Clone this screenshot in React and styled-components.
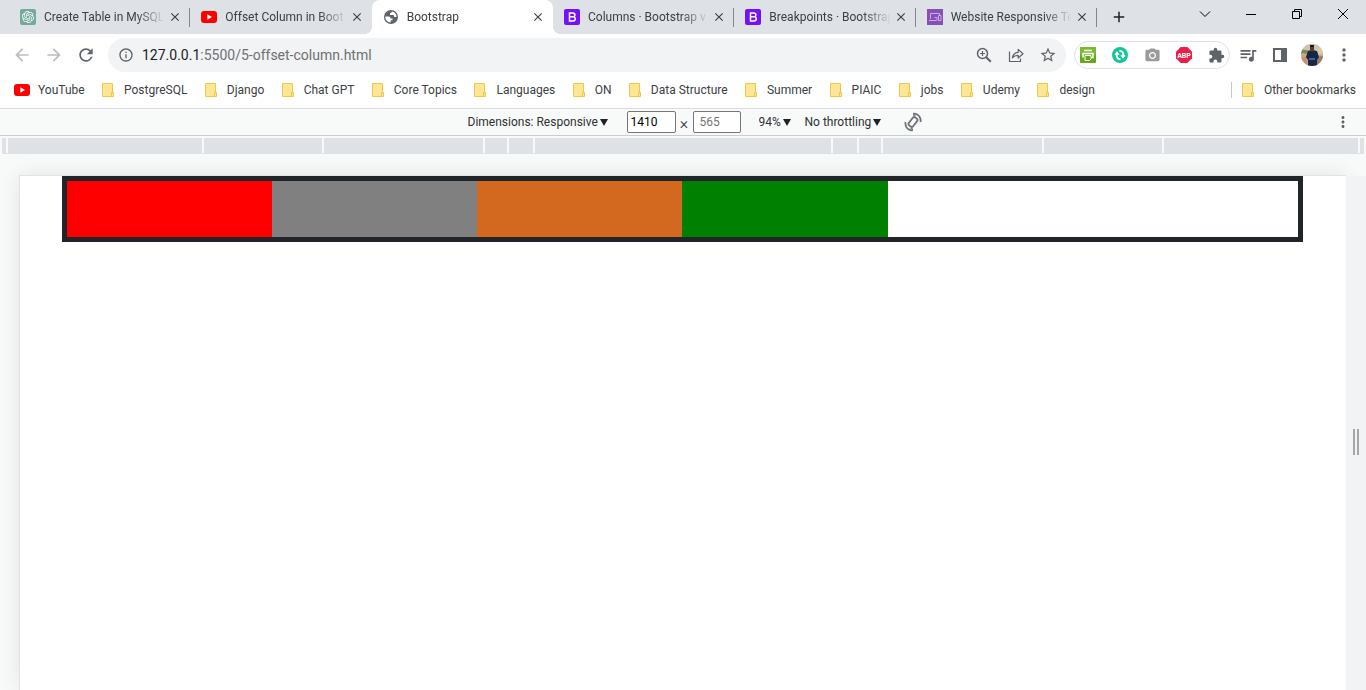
import React from "react";
import styled, { createGlobalStyle, css } from "styled-components";
import {
  MdArrowBack,
  MdArrowForward,
  MdRefresh,
  MdInfoOutline,
  MdStarBorder,
  MdExtension,
  MdQueueMusic,
  MdMoreVert,
  MdClose,
  MdAdd,
  MdPhotoCamera,
} from "react-icons/md";
import { SiOpenai } from "react-icons/si";

const GlobalStyle = createGlobalStyle`
  *, *::before, *::after { box-sizing: border-box; }
  body {
    margin: 0;
    background: #ffffff;
    color: #3c4043;
    font-family: Roboto, "Noto Sans", sans-serif;
    font-size: 12px;
    line-height: 16px;
  }
  button, input, select { font: inherit; color: inherit; }
  svg { display: block; flex: none; }
`;

const Window = styled.div`
  display: flex;
  flex-direction: column;
  min-height: 100vh;
`;

const bare = css`
  display: flex;
  align-items: center;
  justify-content: center;
  border: 0;
  padding: 0;
  background: transparent;
`;

/* Tab strip */

const TabStrip = styled.header`
  display: flex;
  height: 34px;
  padding-left: 9px;
  background: #dee1e6;
`;

const Tabs = styled.nav`
  display: flex;
  flex: 1;
  max-width: 1088px;
  min-width: 0;
`;

const Tab = styled.div`
  position: relative;
  display: flex;
  align-items: center;
  flex: 1;
  min-width: 0;
  padding: 0 7px 0 11px;
  background: ${(p) => (p.$active ? "#ffffff" : "transparent")};
  border-radius: 8px 8px 0 0;

  ${(p) =>
    p.$divider &&
    css`
      &::after {
        content: "";
        position: absolute;
        right: 0;
        top: 8px;
        width: 1px;
        height: 19px;
        background: #80868b;
      }
    `}

  ${(p) =>
    p.$active &&
    css`
      &::before {
        content: "";
        position: absolute;
        left: -8px;
        right: -8px;
        bottom: 0;
        height: 8px;
        background:
          radial-gradient(circle at 0 0, transparent 8px, #ffffff 8px) left / 8px 8px no-repeat,
          radial-gradient(circle at 100% 0, transparent 8px, #ffffff 8px) right / 8px 8px no-repeat;
      }
    `}
`;

const TabTitle = styled.a`
  flex: 1;
  min-width: 0;
  margin-left: 8px;
  overflow: hidden;
  white-space: nowrap;
  color: #3c4043;
  text-decoration: none;
  mask-image: linear-gradient(to right, #000 calc(100% - 28px), transparent);
`;

const TabClose = styled.button`
  ${bare}
  width: 16px;
  height: 16px;
  margin-left: 2px;
  color: #3c4043;
`;

const NewTab = styled.button`
  ${bare}
  width: 28px;
  margin-left: 8px;
  color: #202124;
`;

const WindowControls = styled.div`
  display: flex;
  margin-left: auto;
  padding-bottom: 6px;
`;

const WindowButton = styled.button`
  ${bare}
  width: 46px;
  color: #000000;
`;

/* Toolbar */

const Toolbar = styled.div`
  display: flex;
  align-items: center;
  height: 42px;
  padding: 0 6px;
`;

const IconButton = styled.button`
  ${bare}
  width: 32px;
  height: 28px;
  color: ${(p) => (p.$muted ? "#babcbe" : "#5f6368")};
`;

const AddressBar = styled.div`
  display: flex;
  align-items: center;
  flex: 1;
  min-width: 0;
  height: 34px;
  margin: 0 8px 0 6px;
  padding: 0 2px;
  border-radius: 17px;
  background: #f1f3f4;
`;

const Address = styled.div`
  flex: 1;
  min-width: 0;
  overflow: hidden;
  white-space: nowrap;
  font-size: 14px;
  line-height: 20px;
  color: #6d7175;
`;

const Host = styled.span`
  color: #202124;
`;

const Extensions = styled.div`
  display: flex;
  align-items: center;
  gap: 16px;
  height: 28px;
  padding: 0 5px;
  margin-right: 2px;
  border: 1px solid #dfe1e5;
  border-radius: 14px;
`;

const ExtensionButton = styled.button`
  ${bare}
  width: 16px;
  height: 16px;
  color: #5f6368;
`;

/* Bookmarks */

const BookmarksBar = styled.nav`
  display: flex;
  align-items: center;
  height: 33px;
  padding: 0 10px 5px 14px;
  border-bottom: 1px solid #dadce0;
`;

const BookmarkList = styled.div`
  display: flex;
  justify-content: space-between;
  flex: 1;
  max-width: 1081px;
`;

const Bookmark = styled.a`
  display: flex;
  align-items: center;
  gap: 8px;
  color: #3c4043;
  text-decoration: none;
  white-space: nowrap;
`;

const OtherBookmarks = styled.div`
  margin-left: auto;
  padding-left: 10px;
  border-left: 1px solid #c4c7cb;
`;

/* Device toolbar */

const DeviceBar = styled.div`
  display: grid;
  grid-template-columns: 1fr auto 1fr;
  align-items: center;
  height: 27px;
  padding: 0 7px;
  background: #f8faf9;
  border-bottom: 1px solid #cacdd1;
  color: #303134;
`;

const DeviceControls = styled.form`
  grid-column: 2;
  display: flex;
  align-items: center;
  height: 26px;
  padding-left: 28px;
`;

const Picker = styled.div`
  display: flex;
  align-items: center;
  gap: 1px;
  margin-right: ${(p) => p.$after}px;
`;

const Select = styled.select`
  appearance: none;
  border: 0;
  padding: 0;
  background: transparent;
  height: 24px;
`;

const SizeInput = styled.input`
  width: ${(p) => p.$width}px;
  height: 22px;
  padding: 0 ${(p) => p.$inset}px;
  border: 1px solid #767676;
  border-radius: 2px;
  background: #ffffff;
  color: #000000;

  &::placeholder {
    color: #757575;
    opacity: 1;
  }
`;

const Times = styled.span`
  width: 17px;
  padding-top: 4px;
  text-align: center;
  font-size: 16px;
  font-weight: 300;
`;

const ZoomPicker = styled(Picker)`
  margin-left: 18px;
`;

const RotateButton = styled.button`
  ${bare}
  width: 28px;
  color: #6e7377;
`;

const DeviceMenu = styled.button`
  ${bare}
  grid-column: 3;
  justify-self: end;
  width: 32px;
  color: #5f6368;
`;

/* Breakpoint ruler */

const Ruler = styled.div`
  display: flex;
  padding: 2px 2px 0;
  background: #f8faf9;
`;

const RulerTrack = styled.div`
  display: flex;
  gap: 2px;
  flex: 1;
  height: 16px;
  border-bottom: 1px solid #dee1e6;
`;

const RulerSegment = styled.div`
  flex: ${(p) => p.$span} 0 0;
  background: #dee1e6;
`;

/* Emulated page */

const Stage = styled.main`
  display: flex;
  flex: 1;
  padding: 21px 0 0 19px;
  background: #f8faf9;
  overflow: hidden;
`;

const Page = styled.div`
  flex: 1;
  min-width: 0;
  padding: 0 43px 0 42px;
  background: #ffffff;
  border-top: 1px solid #e1e4e3;
  border-left: 1px solid #e1e4e3;
  box-shadow: 0 0 20px rgba(0, 0, 0, 0.09);
`;

const Container = styled.div`
  display: flex;
  border: 5px solid #212529;
`;

const Column = styled.div`
  width: calc(100% / 6);
  height: 56px;
  background: ${(p) => p.$color};
`;

const ResizeEdge = styled.div`
  position: relative;
  display: flex;
  align-items: center;
  justify-content: center;
  gap: 2px;
  width: 20px;
  margin-top: 1px;
  padding-top: 18px;
  background: #f1f3f4;
`;

const Grip = styled.span`
  width: 2px;
  height: 26px;
  background: #a5a6a7;
`;

/* Icons */

const YouTubeIcon = () => (
  <svg width="16" height="16" viewBox="0 0 16 16">
    <rect y="2" width="16" height="12" rx="3" fill="#ff0000" />
    <path d="M6.3 5.3 11 8l-4.7 2.7z" fill="#ffffff" />
  </svg>
);

const FolderIcon = () => (
  <svg width="14" height="16" viewBox="0 0 14 16">
    <path d="M.5 1.5h10v9h1v4H.5z" fill="#ffe694" stroke="#ebc84c" />
    <path d="M9.500 14v-3.500H11" fill="none" stroke="#ebc84c" />
  </svg>
);

const ChatIcon = () => (
  <svg width="16" height="16" viewBox="0 0 16 16">
    <rect width="16" height="16" rx="2" fill="#74a99b" />
    <SiOpenai x="2" y="2" width="12" height="12" color="#ffffff" />
  </svg>
);

const GlobeIcon = () => (
  <svg width="16" height="16" viewBox="0 0 16 16">
    <circle cx="8" cy="8" r="7" fill="#5f6368" />
    <path
      d="M2.300 7.500h3.400c1.200.2 1.900.8 1.900 1.900H9.500v1.900H7.700l-.1 2.200C4.600 13.400 2.300 11 2.300 7.500zM8.700 2.600c-.1 1.100-.6 1.600-1.700 1.600v1.700h3.200c.5 0 .7.3.8.9l.2 1.100h2.400C13.500 5 11.600 2.900 8.700 2.600z"
      fill="#ffffff"
    />
  </svg>
);

const BootstrapIcon = () => (
  <svg width="16" height="16" viewBox="0 0 16 16">
    <rect width="16" height="16" rx="2" fill="#7511f7" />
    <path
      d="M5.500 4h3.200c1.400 0 2.200.7 2.200 1.900 0 .9-.5 1.600-1.400 1.800 1.100.2 1.800 1 1.800 2 0 1.500-1 2.300-2.600 2.300H5.500z M5.700 7.700h3.500"
      fill="none"
      stroke="#ffffff"
      strokeWidth="1.500"
    />
  </svg>
);

const ResponsiveIcon = () => (
  <svg width="16" height="16" viewBox="0 0 16 16">
    <rect width="16" height="16" fill="#8650b8" />
    <path
      d="M3.500 10V4.500h9v2M2 11.500h7.500M11.500 6.500h2.500v5h-2.500zM7.500 8.500h2.500v3"
      fill="none"
      stroke="#c9abe6"
    />
  </svg>
);

const ZoomIcon = () => (
  <svg width="18" height="18" viewBox="0 0 18 18" fill="none" stroke="currentColor">
    <circle cx="7.500" cy="7.500" r="5" strokeWidth="1.500" />
    <path d="M11.200 11.200l4.600 4.600" strokeWidth="2" />
    <path d="M7.500 5v5M5 7.500h5" strokeWidth="1.200" />
  </svg>
);

const ShareIcon = () => (
  <svg width="18" height="18" viewBox="0 0 18 18" fill="none" stroke="currentColor" strokeWidth="1.200">
    <path d="M2.500 5.500v10h11v-3" />
    <path d="M5.300 11.800c.6-3.600 2.700-5.300 5.900-5.500V3.400l4.800 4.300-4.800 4.300V9.300c-2.500 0-4.400.7-5.900 2.500z" strokeLinejoin="round" />
  </svg>
);

const PrinterIcon = () => (
  <svg width="16" height="16" viewBox="0 0 16 16">
    <rect width="16" height="16" rx="1" fill="#65a818" />
    <rect width="16" height="8" rx="1" fill="#79bb2c" />
    <path d="M4 3.500h8M3 10.500v-4h10v4h-2" fill="none" stroke="#ffffff" strokeWidth="1.500" />
    <path d="M5 8.500h6v3.500l-1.500 1.500H5z" fill="#65a818" stroke="#ffffff" />
  </svg>
);

const SyncIcon = () => (
  <svg width="16" height="16" viewBox="0 0 16 16">
    <circle cx="8" cy="8" r="8" fill="#11c798" />
    <g fill="none" stroke="#ffffff" strokeWidth="2">
      <path d="M8.500 12.300C5.300 12 4.200 9.500 4.800 6.500" />
      <path d="M7.500 3.700c3.200.3 4.300 2.800 3.700 5.800" />
    </g>
    <path d="M2.300 7.800 5 4.300l2.700 3.500zM8.300 8.200h5.400L11 11.700z" fill="#ffffff" />
  </svg>
);

const AdblockIcon = () => (
  <svg width="16" height="16" viewBox="0 0 16 16">
    <path d="M4.700 0h6.600L16 4.700v6.600L11.300 16H4.700L0 11.300V4.700z" fill="#ed1e45" />
    <text x="8" y="10.500" textAnchor="middle" fontFamily="Roboto, sans-serif" fontWeight="700" fontSize="7" fill="#ffffff">
      ABP
    </text>
  </svg>
);

const SidePanelIcon = () => (
  <svg width="16" height="16" viewBox="0 0 16 16">
    <path d="M1 1h14v14H1zM3 3v10h6V3z" fill="currentColor" fillRule="evenodd" />
  </svg>
);

const Avatar = () => (
  <svg width="22" height="22" viewBox="0 0 22 22">
    <defs>
      <clipPath id="avatar-clip">
        <circle cx="11" cy="11" r="11" />
      </clipPath>
    </defs>
    <g clipPath="url(#avatar-clip)">
      <rect width="22" height="22" fill="#c3ab8d" />
      <rect width="22" height="6" fill="#c9c4b4" />
      <path d="M0 5 8 7v3L0 9z" fill="#7a8a53" />
      <path d="M14 5l8-1v6l-7 1z" fill="#dcc9a6" />
      <path d="M0 14l6-2v10H0z" fill="#c98f70" />
      <path d="M16 13l6-1v10h-6z" fill="#9b7a66" />
      <path d="M7 7l4-1 5 1 2 6-2 3v6H7v-6l-2-3z" fill="#16254a" />
      <path d="M9 2h4v4l-2 2-2-2z" fill="#5a3a2c" />
      <path d="M9 1h4v2H9z" fill="#17171c" />
      <path d="M8 14h6v2H8z" fill="#4c5e8c" />
    </g>
  </svg>
);

const RotateIcon = () => (
  <svg width="20" height="20" viewBox="0 0 20 20" fill="none" stroke="currentColor" strokeWidth="1.800">
    <rect x="7.300" y="5" width="5.400" height="10" rx="1.800" transform="rotate(38 10 10)" />
    <path d="M10.500 1.700c2.300-.5 5.300 1.200 6.400 3.600.8 1.700.9 3.200.6 4.700" />
    <path d="M9.500 18.300c-2.300.5-5.300-1.200-6.400-3.600-.8-1.700-.9-3.200-.6-4.700" />
    <path d="M10 .8l3.200 3.400-3.200-.7zM10 19.200l-3.200-3.400 3.200.7z" fill="currentColor" stroke="none" />
  </svg>
);

const Arrow = () => (
  <svg width="8" height="7" viewBox="0 0 8 7">
    <path d="M0 0h8L4 7z" fill="#202124" />
  </svg>
);

const glyph = { fill: "none", stroke: "currentColor", width: 12, height: 12, viewBox: "0 0 12 12" };
const ChevronGlyph = () => (
  <svg {...glyph}>
    <path d="M1 3.500 6 8.500 11 3.500" />
  </svg>
);
const MinimizeGlyph = () => (
  <svg {...glyph}>
    <path d="M1 6.500h10" />
  </svg>
);
const RestoreGlyph = () => (
  <svg {...glyph}>
    <path d="M1.500 3.500h7v7h-7zM3.500 3.500v-2h7v7h-2" />
  </svg>
);
const CloseGlyph = () => (
  <svg {...glyph}>
    <path d="M1 1l10 10M11 1L1 11" />
  </svg>
);

const tabs = [
  { title: "Create Table in MySQL", icon: <ChatIcon />, divider: true },
  { title: "Offset Column in Boot", icon: <YouTubeIcon /> },
  { title: "Bootstrap", icon: <GlobeIcon />, active: true },
  { title: "Columns · Bootstrap v", icon: <BootstrapIcon />, divider: true },
  { title: "Breakpoints · Bootstrap", icon: <BootstrapIcon />, divider: true },
  { title: "Website Responsive Te", icon: <ResponsiveIcon />, divider: true },
];

const folders = [
  "PostgreSQL",
  "Django",
  "Chat GPT",
  "Core Topics",
  "Languages",
  "ON",
  "Data Structure",
  "Summer",
  "PIAIC",
  "jobs",
  "Udemy",
  "design",
];

const rulerSpans = [4, 194, 118, 159, 22, 24, 296, 24, 22, 159, 118, 194, 4];
const columnColors = ["#ff0000", "#808080", "#d2691e", "#008000"];

export default function App() {
  return (
    <Window>
      <GlobalStyle />
      <TabStrip>
        <Tabs aria-label="Tabs">
          {tabs.map((tab) => (
            <Tab key={tab.title} $active={tab.active} $divider={tab.divider}>
              {tab.icon}
              <TabTitle href="#">{tab.title}</TabTitle>
              <TabClose aria-label={`Close ${tab.title}`}>
                <MdClose size={14} />
              </TabClose>
            </Tab>
          ))}
        </Tabs>
        <NewTab aria-label="New tab">
          <MdAdd size={18} />
        </NewTab>
        <WindowControls>
          <WindowButton aria-label="Search tabs"><ChevronGlyph /></WindowButton>
          <WindowButton aria-label="Minimize"><MinimizeGlyph /></WindowButton>
          <WindowButton aria-label="Restore"><RestoreGlyph /></WindowButton>
          <WindowButton aria-label="Close"><CloseGlyph /></WindowButton>
        </WindowControls>
      </TabStrip>

      <Toolbar>
        <IconButton aria-label="Back" $muted><MdArrowBack size={20} /></IconButton>
        <IconButton aria-label="Forward" $muted><MdArrowForward size={20} /></IconButton>
        <IconButton aria-label="Reload"><MdRefresh size={20} /></IconButton>
        <AddressBar>
          <IconButton aria-label="Site information"><MdInfoOutline size={16} /></IconButton>
          <Address>
            <Host>127.0.0.1</Host>:5500/5-offset-column.html
          </Address>
          <IconButton aria-label="Zoom"><ZoomIcon /></IconButton>
          <IconButton aria-label="Share"><ShareIcon /></IconButton>
          <IconButton aria-label="Bookmark this tab"><MdStarBorder size={18} /></IconButton>
        </AddressBar>
        <Extensions>
          <ExtensionButton aria-label="Print"><PrinterIcon /></ExtensionButton>
          <ExtensionButton aria-label="Sync"><SyncIcon /></ExtensionButton>
          <ExtensionButton aria-label="Capture"><MdPhotoCamera size={17} color="#9b9b9b" /></ExtensionButton>
          <ExtensionButton aria-label="Adblock"><AdblockIcon /></ExtensionButton>
          <ExtensionButton aria-label="Extensions"><MdExtension size={17} /></ExtensionButton>
        </Extensions>
        <IconButton aria-label="Media"><MdQueueMusic size={20} /></IconButton>
        <IconButton aria-label="Side panel"><SidePanelIcon /></IconButton>
        <IconButton aria-label="Profile"><Avatar /></IconButton>
        <IconButton aria-label="Menu"><MdMoreVert size={20} /></IconButton>
      </Toolbar>

      <BookmarksBar aria-label="Bookmarks">
        <BookmarkList>
          <Bookmark href="#"><YouTubeIcon />YouTube</Bookmark>
          {folders.map((name) => (
            <Bookmark key={name} href="#"><FolderIcon />{name}</Bookmark>
          ))}
        </BookmarkList>
        <OtherBookmarks>
          <Bookmark href="#"><FolderIcon />Other bookmarks</Bookmark>
        </OtherBookmarks>
      </BookmarksBar>

      <DeviceBar>
        <DeviceControls>
          <Picker $after={19}>
            <Select aria-label="Dimensions"><option>Dimensions: Responsive</option></Select>
            <Arrow />
          </Picker>
          <SizeInput $width={49} $inset={3} aria-label="Width" defaultValue="1410" />
          <Times>×</Times>
          <SizeInput $width={48} $inset={6} aria-label="Height" placeholder="565" />
          <ZoomPicker $after={14}>
            <Select aria-label="Zoom"><option>94%</option></Select>
            <Arrow />
          </ZoomPicker>
          <Picker $after={18}>
            <Select aria-label="Throttling"><option>No throttling</option></Select>
            <Arrow />
          </Picker>
          <RotateButton type="button" aria-label="Rotate"><RotateIcon /></RotateButton>
        </DeviceControls>
        <DeviceMenu aria-label="More options"><MdMoreVert size={18} /></DeviceMenu>
      </DeviceBar>

      <Ruler>
        <RulerTrack>
          {rulerSpans.map((span, i) => (
            <RulerSegment key={i} $span={span} />
          ))}
        </RulerTrack>
      </Ruler>

      <Stage>
        <Page>
          <Container>
            {columnColors.map((color) => (
              <Column key={color} $color={color} />
            ))}
          </Container>
        </Page>
        <ResizeEdge>
          <Grip />
          <Grip />
        </ResizeEdge>
      </Stage>
    </Window>
  );
}
